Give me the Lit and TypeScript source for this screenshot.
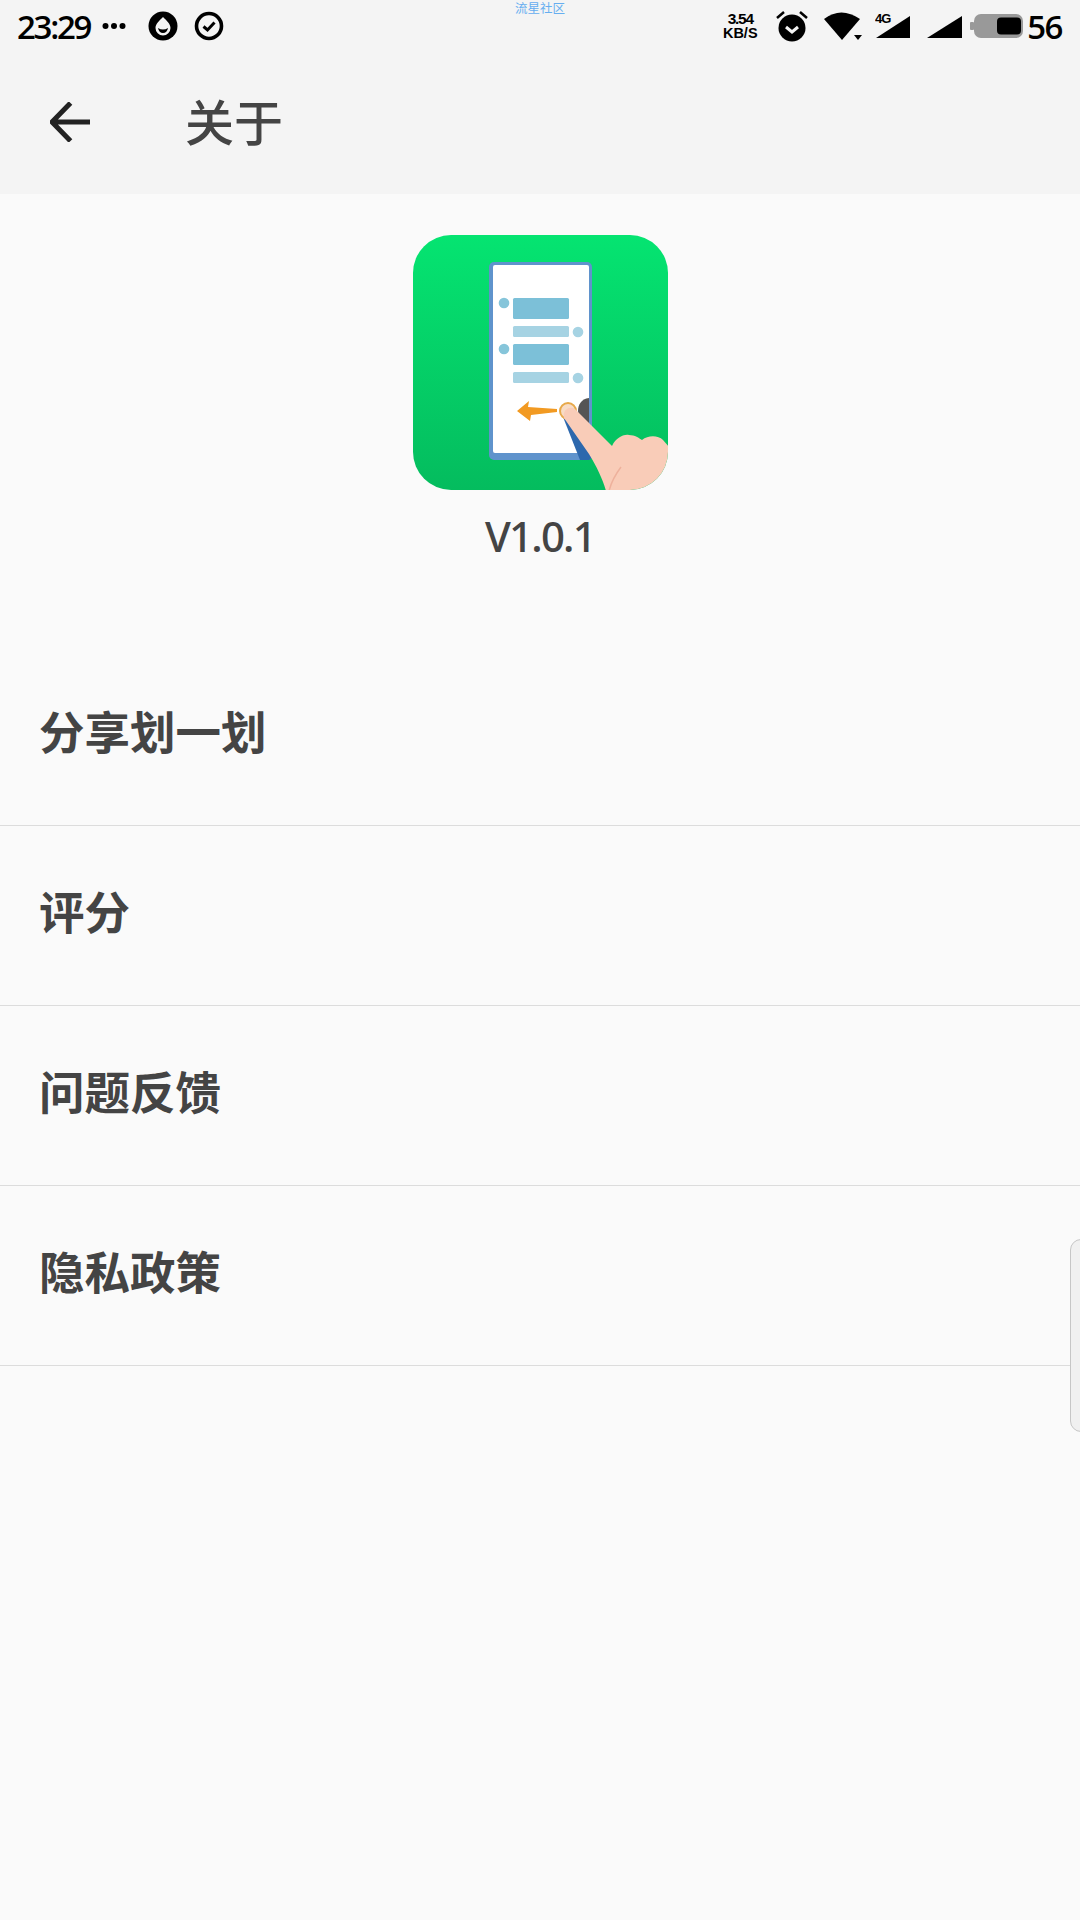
import { LitElement, html, css, svg } from "lit";
import { customElement } from "lit/decorators.js";

const appIcon = svg`
<defs>
  <linearGradient id="g" x1="0" y1="0" x2="0" y2="1">
    <stop offset="0" stop-color="#05e471"/><stop offset="1" stop-color="#04bc5e"/>
  </linearGradient>
  <clipPath id="c"><rect width="255" height="255" rx="38"/></clipPath>
</defs>
<g clip-path="url(#c)">
  <rect width="255" height="255" fill="url(#g)"/>
  <rect x="76" y="27" width="103" height="198" rx="5" fill="#5f93cc"/>
  <rect x="80" y="30" width="96" height="188" rx="2" fill="#fff"/>
  <circle cx="91" cy="68" r="5.3" fill="#86c5da"/>
  <rect x="100" y="63" width="56" height="21" rx="1.5" fill="#7cc0d8"/>
  <rect x="100" y="91" width="56" height="11" rx="1.5" fill="#a6d3e3"/>
  <circle cx="165" cy="97" r="5.3" fill="#a6d3e3"/>
  <circle cx="91" cy="114" r="5.3" fill="#86c5da"/>
  <rect x="100" y="109" width="56" height="21" rx="1.5" fill="#7cc0d8"/>
  <rect x="100" y="137" width="56" height="11" rx="1.5" fill="#a6d3e3"/>
  <circle cx="165" cy="143" r="5.3" fill="#a6d3e3"/>
  <path d="M104 176 L116 166 L115 172 L144 174 L144 177 L118 180 L117 186 Z" fill="#f29a22"/>
  <path d="M176 163 C168 164 165 170 165 176 C165 182 170 188 176 188 Z" fill="#555"/>
  <path d="M150 182 L167 225 L176 225 Q179 224 179 220 L178 216 L160 176 Z" fill="#2d68ad"/>
  <circle cx="155" cy="176" r="8" fill="#f8dcc6" stroke="#e7a94a" stroke-width="2"/>
  <path d="M151 183 C149 174 158 170 163 175 L199 211 C203 203 210 199 216 200 C222 200 226 203 229 205 C235 200 245 200 250 205 L256 212 L256 256 L193 256 C190 245 184 232 176 219 Z" fill="#f9ccb8"/>
  <path d="M196 256 C198 248 202 240 208 232" fill="none" stroke="#eeb19c" stroke-width="1.5"/>
</g>`;

const rows = ["分享划一划", "评分", "问题反馈", "隐私政策"];

@customElement("app-root")
export class AppRoot extends LitElement {
  static styles = css`
    :host {
      display: block;
      width: 1080px;
      height: 1920px;
      position: relative;
      overflow: hidden;
      background: #fafafa;
      font-family: "Noto Sans CJK SC", "Noto Sans", sans-serif;
      color: #444;
    }
    header { background: #f4f4f4; height: 194px; }
    .status {
      height: 52px;
      display: flex;
      align-items: center;
      justify-content: space-between;
      padding: 0 18px 0 17px;
      color: #000;
    }
    .group { display: flex; align-items: center; }
    .time {
      font: 600 33px/1 "Open Sans", sans-serif;
      letter-spacing: -2.3px;
      width: 85px;
      margin-top: 1px;
    }
    .left svg { display: block; }
    .dots { margin-right: 22px; }
    .ic1 { margin-right: 16px; }
    .speed {
      width: 38px;
      margin-right: 16px;
      text-align: center;
      font: 700 14.5px/14px "Liberation Sans", sans-serif;
    }
    .speed b { display: block; font-size: 15.5px; letter-spacing: -1.3px; font-weight: 700; }
    .right svg { display: block; }
    .alarm { margin-right: 15px; }
    .wifi { margin-right: 13px; }
    .sig1 { margin-right: 16px; }
    .sig2 { margin-right: 8px; }
    .battery { margin-right: 4px; }
    .batt { font: 600 33px/1 "Open Sans", sans-serif; letter-spacing: -1.5px; margin-top: 1px; }
    .carrier {
      position: absolute;
      top: 0;
      left: 0;
      right: 0;
      text-align: center;
      color: #66aef0;
      font-size: 12.5px;
      line-height: 15px;
    }
    .bar {
      height: 142px;
      display: flex;
      align-items: center;
      padding-left: 50px;
      box-sizing: border-box;
      padding-bottom: 2px;
    }
    .bar svg { display: block; margin-right: 95px; }
    .bar h1 { margin: -6px 0 0; font-size: 49px; line-height: 1; font-weight: 500; color: #444; }
    .about {
      display: flex;
      flex-direction: column;
      align-items: center;
      padding-top: 41px;
      height: 452px;
      box-sizing: border-box;
    }
    .about svg { display: block; }
    .ver {
      margin-top: 17px;
      font: 500 42px/58px "Noto Sans", sans-serif;
      letter-spacing: -1.8px;
      color: #444;
    }
    .row {
      height: 180px;
      box-sizing: border-box;
      border-bottom: 1.5px solid #dcdcdc;
      display: flex;
      align-items: center;
      padding: 0 0 12px 39px;
      font-size: 45.5px;
      font-weight: 700;
      color: #444;
    }
    .handle {
      position: absolute;
      right: -12px;
      top: 1239px;
      width: 20px;
      height: 191px;
      border: 1.5px solid #c6c6c6;
      border-radius: 12px;
      background: #f0f0f0;
    }
  `;

  render() {
    return html`
      <header>
        <div class="status">
          <div class="group left">
            <span class="time">23:29</span>
            <svg class="dots" width="24" height="8" viewBox="0 0 24 8"><circle cx="3.5" cy="4" r="3" /><circle cx="12" cy="4" r="3" /><circle cx="20.5" cy="4" r="3" /></svg>
            <svg class="ic1" width="30" height="30" viewBox="0 0 30 30">
              <circle cx="15" cy="15" r="14.5" />
              <path d="M15 6 C11 10 7.5 13 7.5 17 A7.5 7.5 0 0 0 22.5 17 C22.5 13 19 10 15 6 Z" fill="#f4f4f4" />
              <path d="M10 17 Q15 20 20 17 Q19 22 15 22 Q11 22 10 17 Z" />
            </svg>
            <svg width="30" height="30" viewBox="0 0 30 30">
              <circle cx="15" cy="15" r="12.5" fill="none" stroke="#000" stroke-width="3.6" />
              <path d="M9.5 15.5 L13.5 19 L20.5 11.5" fill="none" stroke="#000" stroke-width="3" />
            </svg>
          </div>
          <div class="group right">
            <div class="speed"><b>3.54</b>KB/S</div>
            <svg class="alarm" width="34" height="32" viewBox="0 0 34 32">
              <circle cx="17" cy="18" r="13.5" />
              <path d="M11 17 L17 22 L23 17" fill="none" stroke="#f4f4f4" stroke-width="3" />
              <path d="M2 8 L9 2 M32 8 L25 2" stroke="#000" stroke-width="2.5" fill="none" />
            </svg>
            <svg class="wifi" width="38" height="30" viewBox="0 0 38 30">
              <path d="M0 8 Q17 -5 36 8 L18 29 Z" />
              <path d="M30 24 L38 24 L34 29 Z" />
            </svg>
            <svg class="sig1" width="36" height="30" viewBox="0 0 36 30">
              <path d="M1 27 L35 5 L35 27 Z" />
              <text x="0" y="12" font-family="Liberation Sans" font-weight="700" font-size="13" letter-spacing="-1">4G</text>
            </svg>
            <svg class="sig2" width="35" height="30" viewBox="0 0 35 30"><path d="M0 27 L35 5 L35 27 Z" /></svg>
            <svg class="battery" width="53" height="26" viewBox="0 0 53 26">
              <rect x="0" y="9" width="4" height="8" rx="1" fill="#999" />
              <rect x="4" y="1" width="49" height="24" rx="7" fill="#999" />
              <rect x="27" y="4.5" width="24" height="17" rx="4" />
            </svg>
            <span class="batt">56</span>
          </div>
        </div>
        <div class="bar">
          <svg width="40" height="40" viewBox="0 0 40 40">
            <path d="M40 20 L2 20 M20.5 1 L2 20 L20.5 39" fill="none" stroke="#222" stroke-width="5" />
          </svg>
          <h1>关于</h1>
        </div>
      </header>
      <div class="carrier">流星社区</div>
      <section class="about">
        <svg width="255" height="255" viewBox="0 0 255 255">${appIcon}</svg>
        <div class="ver">V1.0.1</div>
      </section>
      <section>
        ${rows.map((r) => html`<div class="row">${r}</div>`)}
      </section>
      <div class="handle"></div>
    `;
  }
}
